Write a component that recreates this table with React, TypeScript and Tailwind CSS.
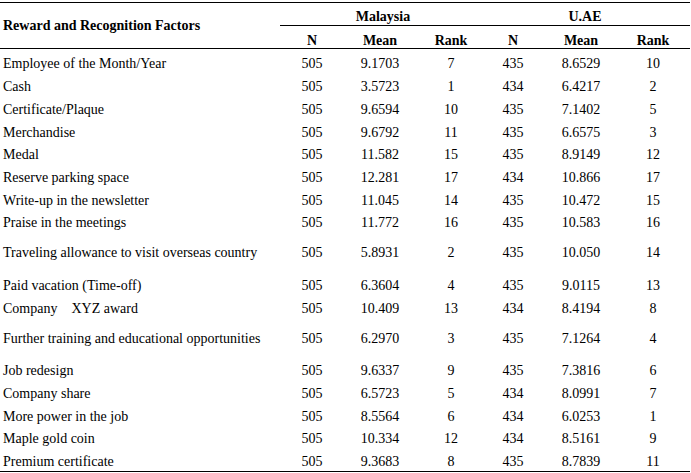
import React from 'react';

type Row = {
    factor: string;
    my: [string, string, string];
    ae: [string, string, string];
    tall?: boolean;
};

const rows: Row[] = [
    { factor: 'Employee of the Month/Year', my: ['505', '9.1703', '7'], ae: ['435', '8.6529', '10'] },
    { factor: 'Cash', my: ['505', '3.5723', '1'], ae: ['434', '6.4217', '2'] },
    { factor: 'Certificate/Plaque', my: ['505', '9.6594', '10'], ae: ['435', '7.1402', '5'] },
    { factor: 'Merchandise', my: ['505', '9.6792', '11'], ae: ['435', '6.6575', '3'] },
    { factor: 'Medal', my: ['505', '11.582', '15'], ae: ['435', '8.9149', '12'] },
    { factor: 'Reserve parking space', my: ['505', '12.281', '17'], ae: ['434', '10.866', '17'] },
    { factor: 'Write-up in the newsletter', my: ['505', '11.045', '14'], ae: ['435', '10.472', '15'] },
    { factor: 'Praise in the meetings', my: ['505', '11.772', '16'], ae: ['435', '10.583', '16'] },
    { factor: 'Traveling allowance to visit overseas country', my: ['505', '5.8931', '2'], ae: ['435', '10.050', '14'], tall: true },
    { factor: 'Paid vacation (Time-off)', my: ['505', '6.3604', '4'], ae: ['435', '9.0115', '13'] },
    { factor: 'Company\u00a0\u00a0\u00a0 XYZ award', my: ['505', '10.409', '13'], ae: ['434', '8.4194', '8'] },
    { factor: 'Further training and educational opportunities', my: ['505', '6.2970', '3'], ae: ['435', '7.1264', '4'], tall: true },
    { factor: 'Job redesign', my: ['505', '9.6337', '9'], ae: ['435', '7.3816', '6'] },
    { factor: 'Company share', my: ['505', '6.5723', '5'], ae: ['434', '8.0991', '7'] },
    { factor: 'More power in the job', my: ['505', '8.5564', '6'], ae: ['434', '6.0253', '1'] },
    { factor: 'Maple gold coin', my: ['505', '10.334', '12'], ae: ['434', '8.5161', '9'] },
    { factor: 'Premium certificate', my: ['505', '9.3683', '8'], ae: ['435', '8.7839', '11'] },
];

const cols = 'grid grid-cols-[280px_64px_72px_70px_54px_82px_68px]';

export default function App() {
    return (
        <div className="w-[691px] h-[473px] bg-white pt-[2px] text-black text-[14px] font-[family-name:Liberation_Serif,serif]">
            <div className="w-[690px] border-t border-b border-black pb-[1.5px]">
                {/* header */}
                <div className="flex border-b border-black">
                    <div className="w-[280px] flex items-center pl-[3px] pt-[1px] font-bold">
                        Reward and Recognition Factors
                    </div>
                    <div className="flex-1 flex flex-col font-bold">
                        <div className="h-[22.7px] pt-[6px] flex items-center border-b border-black">
                            <div className="w-[206px] text-center">Malaysia</div>
                            <div className="w-[198px] text-center">U.AE</div>
                        </div>
                        <div className="h-[22.3px] pt-[4px] grid grid-cols-[64px_72px_70px_54px_82px_68px] items-center text-center">
                            <div>N</div>
                            <div>Mean</div>
                            <div>Rank</div>
                            <div>N</div>
                            <div>Mean</div>
                            <div className="pr-[6px]">Rank</div>
                        </div>
                    </div>
                </div>

                {/* body */}
                {rows.map((r) => (
                    <div key={r.factor} className={`${cols} items-center pt-[4.5px] ${r.tall ? 'h-[40px]' : 'h-[22.7px]'}`}>
                        <div className="pl-[3px] whitespace-pre">{r.factor}</div>
                        <div className="text-center">{r.my[0]}</div>
                        <div className="text-center">{r.my[1]}</div>
                        <div className="text-center">{r.my[2]}</div>
                        <div className="text-center">{r.ae[0]}</div>
                        <div className="text-center">{r.ae[1]}</div>
                        <div className="text-center pr-[6px]">{r.ae[2]}</div>
                    </div>
                ))}
            </div>
        </div>
    );
}
